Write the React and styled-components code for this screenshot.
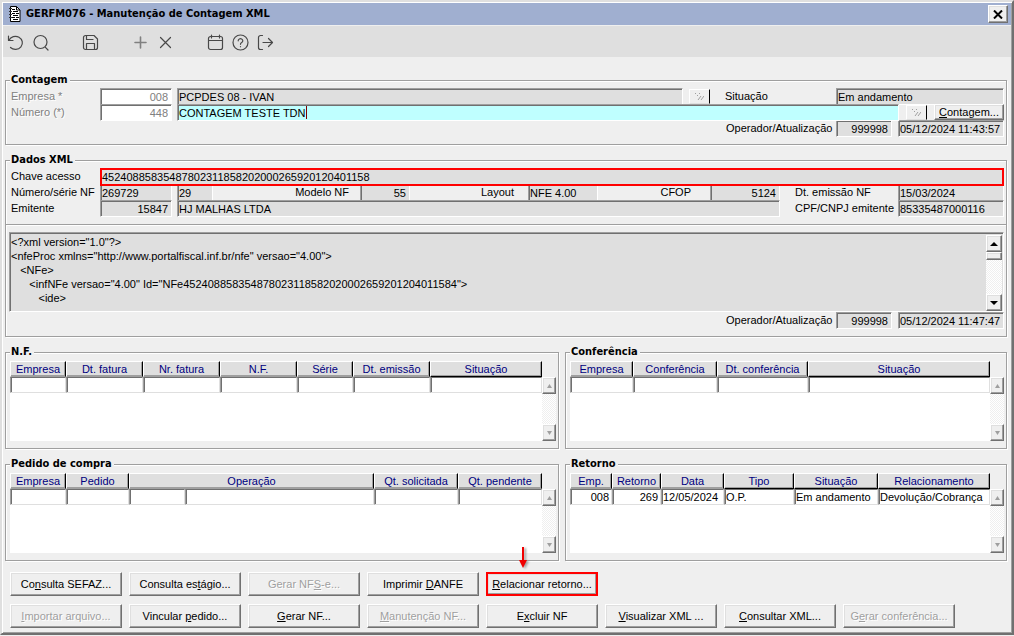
import React from "react";
import styled, { createGlobalStyle, css } from "styled-components";

const GlobalStyle = createGlobalStyle`
  * {
    box-sizing: border-box;
  }

  body {
    margin: 0;
    background: #efefef;
    color: #000;
  }

  body, input, button, textarea, table {
    font-family: "Liberation Sans", Arial, sans-serif;
    font-size: 11px;
    line-height: 14px;
  }
`;

const boldFont = css`
  font-family: "DejaVu Sans Condensed", "DejaVu Sans", sans-serif;
  font-size: 11px;
  font-weight: 700;
`;

const raised = css`
  border: 1px solid;
  border-color: #fff #707070 #707070 #fff;
  box-shadow: inset -1px -1px #9f9f9f, inset 1px 1px #dfdfdf;
  background: #efefef;
`;

const sunken = css`
  border: 1px solid;
  border-color: #9f9f9f #fff #fff #9f9f9f;
  box-shadow: inset 1px 1px #707070;
`;

const Window = styled.main`
  min-width: 960px;
  border: 2px solid;
  border-color: #dfdfdf #707070 #707070 #dfdfdf;
  box-shadow: inset 1px 1px #fff, inset -1px -1px #9f9f9f;
  padding: 1px 1px 5px;
`;

const TitleBar = styled.header`
  display: flex;
  align-items: center;
  height: 22px;
  padding: 0 3px 0 5px;
  background: #a0afd0;
`;

const Title = styled.h1`
  ${boldFont}
  flex: 1;
  margin: 0 0 0 5px;
  line-height: 22px;
`;

const CloseButton = styled.button`
  ${raised}
  display: flex;
  align-items: center;
  justify-content: center;
  width: 20px;
  height: 18px;
  padding: 0;
`;

const Toolbar = styled.nav`
  display: flex;
  height: 32px;
  padding-top: 2px;
  border-top: 1px solid #efefef;
  background: #dfdfdf;
`;

const ToolButton = styled.button`
  display: flex;
  align-items: center;
  justify-content: center;
  width: 25px;
  padding: 0;
  margin-left: ${(props) => (props.$spaced ? "25px" : "0")};
  border: 0;
  background: none;
  color: ${(props) => (props.$soft ? "#808080" : "#484848")};

  svg {
    fill: none;
    stroke: currentColor;
    stroke-width: ${(props) => (props.$soft ? 1.6 : 1.2)};
    stroke-linecap: round;
    stroke-linejoin: round;
  }
`;

const Content = styled.div`
  padding: 16px 4px 0 2px;
`;

const Group = styled.fieldset`
  min-width: 0;
  margin: 0;
  padding: 1px 2px 8px 4px;
  border: 1px solid #9f9f9f;
  box-shadow: inset 1px 1px #fff, 1px 1px #fff;
`;

const Legend = styled.legend`
  ${boldFont}
  height: 14px;
  padding: 0 2px 0 1px;
  background: #efefef;
`;

const Stack = styled.div`
  display: grid;
  gap: 8px;
`;

const XmlPanel = styled.section`
  padding: 7px 2px 8px 3px;
  border: 1px solid #9f9f9f;
  border-top: 0;
  box-shadow: inset 1px 1px #fff, 1px 1px #fff;
`;

const Row = styled.div`
  display: flex;
  height: 16px;
  justify-content: ${(props) => (props.$end ? "flex-end" : "flex-start")};
`;

const Label = styled.label`
  flex: ${(props) => (props.$grow ? `1 1 ${props.$w}px` : `0 0 ${props.$w}px`)};
  padding: 0 ${(props) => props.$pad || 0}px 0 ${(props) => (props.$inset ? 15 : 1)}px;
  line-height: 16px;
  white-space: nowrap;
  text-align: ${(props) => (props.$right ? "right" : "left")};
  ${(props) =>
    props.$dim &&
    css`
      color: #808080;
      text-shadow: 1px 1px #fff;
    `}
`;

const Field = styled.input`
  ${sunken}
  flex: ${(props) => (props.$w ? `0 0 ${props.$w}px` : "1 1 0")};
  min-width: 0;
  width: 100%;
  height: 17px;
  margin-left: ${(props) => props.$gap || 0}px;
  padding: 1px 3px 0 1px;
  border-radius: 0;
  outline: 0;
  background: #dfdfdf;
  color: #000;
  text-align: ${(props) => (props.$right ? "right" : "left")};
  ${(props) => props.$open && "background: #fff; color: #808080;"}
  ${(props) => props.$active && "background: #bfffff;"}
  ${(props) =>
    props.$marked &&
    css`
      z-index: 1;
      height: 18px;
      padding: 0;
      border: 2px solid #f00;
      box-shadow: none;
    `}
`;

const ActiveField = styled.span`
  position: relative;
  display: flex;
  flex: 1;
  margin-left: 5px;
`;

const Caret = styled.i`
  position: absolute;
  top: 2px;
  left: 129px;
  width: 1px;
  height: 13px;
  background: #800000;
`;

const LookupButton = styled.button`
  display: flex;
  align-items: center;
  justify-content: center;
  flex: 0 0 21px;
  height: 15px;
  margin: 1px 0 0 ${(props) => props.$gap}px;
  padding: 0;
  border: 1px solid;
  border-color: #fff #000 #dfdfdf #fff;
  background: #efefef;
`;

const ContagemButton = styled.button`
  ${raised}
  flex: 0 0 70px;
  height: 16px;
  margin-left: 7px;
  padding: 0;
  line-height: 13px;
`;

const XmlBox = styled.div`
  ${sunken}
  display: flex;
  height: 80px;
  padding: 2px 1px 0 1px;
  background: #dfdfdf;
`;

const XmlText = styled.textarea`
  flex: 1;
  height: 100%;
  margin: 0;
  padding: 0;
  border: 0;
  outline: 0;
  overflow: hidden;
  resize: none;
  background: none;
  white-space: pre;
`;

const ScrollTrack = styled.div`
  display: flex;
  flex: 0 0 ${(props) => props.$w}px;
  flex-direction: column;
  margin-top: ${(props) => props.$top || 0}px;
  background: repeating-conic-gradient(#efefef 0 25%, #fff 0 50%) 0 0 / 2px 2px;
`;

const ScrollButton = styled.button`
  ${raised}
  display: flex;
  align-items: center;
  justify-content: center;
  height: 17px;
  padding: 0;

  &:last-child {
    margin-top: auto;
  }
`;

const ScrollThumb = styled.div`
  ${raised}
  height: 8px;
`;

const Grids = styled.div`
  display: grid;
  grid-template-columns: 554fr 442fr;
  gap: 8px 6px;
`;

const GridBody = styled.div`
  display: flex;
  height: 80px;
  margin: 1px 0 -1px;
`;

const TableArea = styled.div`
  flex: 1;
  min-width: 0;
  background: #fff;
`;

const Table = styled.table`
  width: 100%;
  table-layout: fixed;
  border-collapse: separate;
  border-spacing: 0;
`;

const HeadCell = styled.th`
  height: 16px;
  padding: 0;
  border: 1px solid;
  border-color: #fff #000 ${(props) => (props.$dark ? "#000" : "#9f9f9f")} #fff;
  box-shadow: inset -1px -1px #9f9f9f;
  background: #dfdfdf;
  color: #000080;
  font-weight: 400;
  white-space: nowrap;
`;

const Cell = styled.td`
  height: 16px;
  padding: 0 2px 0 1px;
  border: 1px solid;
  border-color: #707070 #dfdfdf #dfdfdf #9f9f9f;
  box-shadow: inset 1px 0 #707070;
  background: #fff;
  line-height: 13px;
  text-align: ${(props) => (props.$right ? "right" : "left")};
  white-space: nowrap;
`;

const Actions = styled.div`
  display: flex;
  flex-wrap: wrap;
  gap: 7px;
  padding: 0 4px 0 5px;
  margin-top: ${(props) => props.$top}px;
`;

const ActionButton = styled.button`
  ${raised}
  position: relative;
  width: 112px;
  height: 24px;
  padding: 0 0 1px;
  color: #000;
  white-space: nowrap;

  &:disabled {
    color: #9f9f9f;
    text-shadow: 1px 1px #fff;
  }

  ${(props) => props.$marked && "border: 2px solid #f00;"}
`;

const Pointer = styled.svg`
  position: absolute;
  top: -28px;
  left: 28px;
  filter: drop-shadow(2px 1px 1px #a0a0a0);
`;

const tools = [
  { name: "Desfazer", draw: <path d="M1.5 2v4.5h4.5M2 6.2a7 6.5 0 1 1 1.5 7.3" /> },
  { name: "Pesquisar", draw: <path d="M8.5 1.500a6.500 6.500 0 1 1 0 13a6.500 6.500 0 1 1 0-13M13.200 13.200l2.800 2.800" /> },
  {
    name: "Salvar",
    spaced: true,
    draw: <path d="M1.500 3.500a2 2 0 0 1 2-2h8.500l3.500 3.500v8.500a2 2 0 0 1-2 2h-10a2 2 0 0 1-2-2zM4.500 15.500v-6h8v6M4.500 1.500v4h6.500" />,
  },
  { name: "Incluir", spaced: true, soft: true, draw: <path d="M8.500 3v11M3 8.500h11" /> },
  { name: "Excluir", draw: <path d="M3.500 3.500l10 10M13.500 3.500l-10 10" /> },
  {
    name: "Calendário",
    spaced: true,
    draw: <path d="M3.500 2.500h10a2 2 0 0 1 2 2v9a2 2 0 0 1-2 2h-10a2 2 0 0 1-2-2v-9a2 2 0 0 1 2-2zM1.500 6.500h14M4.500 1v3M12.500 1v3" />,
  },
  {
    name: "Ajuda",
    draw: <path d="M8.500 1a7.500 7.500 0 1 1 0 15a7.500 7.500 0 1 1 0-15M6.200 6.800a2.300 2.100 0 1 1 3.500 1.800q-1.200.7-1.200 1.700M8.500 12.500v.2" />,
  },
  { name: "Sair", draw: <path d="M5.500 1.500h-2a2 2 0 0 0-2 2v10a2 2 0 0 0 2 2h2M6 8.500h9.500M11.500 4.500l4 4l-4 4" /> },
];

const xml = `<?xml version="1.0"?>
<nfeProc xmlns="http://www.portalfiscal.inf.br/nfe" versao="4.00">
   <NFe>
      <infNFe versao="4.00" Id="NFe452408858354878023118582020002659201204011584">
         <ide>`;

const actionRows = [
  [
    { text: "Co&nsulta SEFAZ..." },
    { text: "Consulta es&tágio..." },
    { text: "Gerar NF&S-e...", off: true },
    { text: "Imprimir &DANFE" },
    { text: "&Relacionar retorno...", marked: true },
  ],
  [
    { text: "&Importar arquivo...", off: true },
    { text: "Vincular &pedido..." },
    { text: "&Gerar NF..." },
    { text: "&Manutenção NF...", off: true },
    { text: "E&xcluir NF" },
    { text: "&Visualizar XML ..." },
    { text: "&Consultar XML..." },
    { text: "G&erar conferência...", off: true },
  ],
];

// the letter after & is the keyboard shortcut
const Mnemonic = ({ text }) => {
  const [before, after] = text.split("&");
  return (
    <>
      {before}
      <u>{after[0]}</u>
      {after.slice(1)}
    </>
  );
};

const Arrow = ({ down, color = "#9f9f9f", size = 5 }) => (
  <svg width={size} height="4" viewBox="0 0 8 4" preserveAspectRatio="none">
    <path d={down ? "M0 0h8l-4 4z" : "M0 4h8l-4-4z"} fill={color} />
  </svg>
);

const Lookup = ({ gap, name }) => (
  <LookupButton $gap={gap} disabled aria-label={name}>
    <svg width="9" height="8" stroke="#9f9f9f" fill="none">
      <path d="M0 .5h1M2 2.500h1M4 .5h1M3 7l3-4M6 7l3-4" />
    </svg>
  </LookupButton>
);

const DataGrid = ({ title, columns, widths, cells }) => (
  <Group>
    <Legend>{title}</Legend>
    <GridBody>
      <TableArea>
        <Table aria-label={title}>
          <colgroup>
            {widths.map((width, i) => (
              <col key={i} width={width} />
            ))}
          </colgroup>
          <thead>
            <tr>
              {columns.map((column) => (
                <HeadCell key={column.name} colSpan={column.span} $dark={column.dark}>
                  {column.name}
                </HeadCell>
              ))}
            </tr>
          </thead>
          <tbody>
            <tr>
              {widths.map((width, i) => (
                <Cell key={i} $right={i < 2}>
                  {cells ? cells[i] : ""}
                </Cell>
              ))}
            </tr>
          </tbody>
        </Table>
      </TableArea>
      <ScrollTrack $w={14} $top={16}>
        <ScrollButton disabled aria-label="Subir">
          <Arrow />
        </ScrollButton>
        <ScrollButton disabled aria-label="Descer">
          <Arrow down />
        </ScrollButton>
      </ScrollTrack>
    </GridBody>
  </Group>
);

export default () => {
  return (
    <>
      <GlobalStyle />
      <Window>
        <TitleBar>
          <svg width="13" height="16">
            <path d="M2.500.5h6l3.500 3.500v11.500h-9.500z" fill="#fff" stroke="#000" />
            <path d="M8.500.5v3.500h3.500M4 3.500h3M5 5.500h5M4 7.500h3M8 7.500h3M5 9.500h5M4 11.500h3M8 11.500h3M5 13.500h5" stroke="#000" fill="none" />
            <path d="M1 2.500h3M1 5.500h3M1 8.500h3M1 11.500h3" stroke="#333" />
          </svg>
          <Title>GERFM076 - Manutenção de Contagem XML</Title>
          <CloseButton aria-label="Fechar">
            <svg width="10" height="9">
              <path d="M1 .5l8 8M9 .5l-8 8" stroke="#000" strokeWidth="2" />
            </svg>
          </CloseButton>
        </TitleBar>

        <Toolbar>
          {tools.map((tool) => (
            <ToolButton key={tool.name} aria-label={tool.name} $spaced={tool.spaced} $soft={tool.soft}>
              <svg width="17" height="17">
                {tool.draw}
              </svg>
            </ToolButton>
          ))}
        </Toolbar>

        <Content>
          <Stack>
            <Group>
              <Legend>Contagem</Legend>
              <Row>
                <Label htmlFor="empresa" $w={90} $dim>Empresa *</Label>
                <Field id="empresa" $w={72} $right $open defaultValue="008" />
                <Field aria-label="Nome da empresa" $gap={5} readOnly defaultValue="PCPDES 08 - IVAN" />
                <Lookup gap={6} name="Buscar empresa" />
                <Label htmlFor="situacao" $w={126} $inset>Situação</Label>
                <Field id="situacao" $w={168} readOnly defaultValue="Em andamento" />
              </Row>
              <Row>
                <Label htmlFor="numero" $w={90} $dim>Número (*)</Label>
                <Field id="numero" $w={72} $right $open defaultValue="448" />
                <ActiveField>
                  <Field aria-label="Descrição" $active defaultValue="CONTAGEM TESTE TDN" />
                  <Caret />
                </ActiveField>
                <Lookup gap={7} name="Buscar contagem" />
                <ContagemButton>
                  <Mnemonic text="&Contagem..." />
                </ContagemButton>
              </Row>
              <Row $end>
                <Label htmlFor="operador" $w={111}>Operador/Atualização</Label>
                <Field id="operador" $w={56} $right readOnly defaultValue="999998" />
                <Field aria-label="Data da atualização" $w={106} $gap={6} readOnly defaultValue="05/12/2024 11:43:57" />
              </Row>
            </Group>

            <div>
              <Group>
                <Legend>Dados XML</Legend>
                <Row>
                  <Label htmlFor="chave" $w={90}>Chave acesso</Label>
                  <Field id="chave" $marked readOnly defaultValue="45240885835487802311858202000265920120401158" />
                </Row>
                <Row>
                  <Label htmlFor="nf" $w={90}>Número/série NF</Label>
                  <Field id="nf" $w={72} readOnly defaultValue="269729" />
                  <Field aria-label="Série" $w={36} $gap={5} readOnly defaultValue="29" />
                  <Label htmlFor="modelo" $w={147} $grow $right $pad={11}>Modelo NF</Label>
                  <Field id="modelo" $w={50} $right readOnly defaultValue="55" />
                  <Label htmlFor="layout" $w={118} $grow $right $pad={14}>Layout</Label>
                  <Field id="layout" $w={70} readOnly defaultValue="NFE 4.00" />
                  <Label htmlFor="cfop" $w={112} $grow $right $pad={19}>CFOP</Label>
                  <Field id="cfop" $w={70} $right readOnly defaultValue="5124" />
                  <Label htmlFor="emissao" $w={118} $inset>Dt. emissão NF</Label>
                  <Field id="emissao" $w={106} readOnly defaultValue="15/03/2024" />
                </Row>
                <Row>
                  <Label htmlFor="emitente" $w={90}>Emitente</Label>
                  <Field id="emitente" $w={72} $right readOnly defaultValue="15847" />
                  <Field aria-label="Nome do emitente" $gap={5} readOnly defaultValue="HJ MALHAS LTDA" />
                  <Label htmlFor="cnpj" $w={118} $inset>CPF/CNPJ emitente</Label>
                  <Field id="cnpj" $w={106} readOnly defaultValue="85335487000116" />
                </Row>
              </Group>
              <XmlPanel>
                <XmlBox>
                  <XmlText aria-label="XML" rows={5} readOnly defaultValue={xml} />
                  <ScrollTrack $w={16}>
                    <ScrollButton aria-label="Subir">
                      <Arrow color="#000" size={8} />
                    </ScrollButton>
                    <ScrollThumb />
                    <ScrollButton aria-label="Descer">
                      <Arrow down color="#000" size={8} />
                    </ScrollButton>
                  </ScrollTrack>
                </XmlBox>
                <Row $end>
                  <Label htmlFor="operadorXml" $w={111}>Operador/Atualização</Label>
                  <Field id="operadorXml" $w={56} $right readOnly defaultValue="999998" />
                  <Field aria-label="Data da atualização do XML" $w={106} $gap={6} readOnly defaultValue="05/12/2024 11:47:47" />
                </Row>
              </XmlPanel>
            </div>

            <Grids>
              <DataGrid
                title="N.F."
                widths={[56, 77, 77, 77, 56, 77, "auto"]}
                columns={[
                  { name: "Empresa" },
                  { name: "Dt. fatura" },
                  { name: "Nr. fatura" },
                  { name: "N.F." },
                  { name: "Série" },
                  { name: "Dt. emissão" },
                  { name: "Situação", dark: true },
                ]}
              />
              <DataGrid
                title="Conferência"
                widths={[63, 84, 91, "auto"]}
                columns={[
                  { name: "Empresa" },
                  { name: "Conferência" },
                  { name: "Dt. conferência" },
                  { name: "Situação", dark: true },
                ]}
              />
              <DataGrid
                title="Pedido de compra"
                widths={[56, 63, 56, "auto", 84, 84]}
                columns={[
                  { name: "Empresa" },
                  { name: "Pedido" },
                  { name: "Operação", span: 2 },
                  { name: "Qt. solicitada" },
                  { name: "Qt. pendente" },
                ]}
              />
              <DataGrid
                title="Retorno"
                widths={[42, 49, 63, 70, 84, "auto"]}
                cells={["008", "269", "12/05/2024", "O.P.", "Em andamento", "Devolução/Cobrança"]}
                columns={[
                  { name: "Emp." },
                  { name: "Retorno" },
                  { name: "Data" },
                  { name: "Tipo", dark: true },
                  { name: "Situação", dark: true },
                  { name: "Relacionamento", dark: true },
                ]}
              />
            </Grids>
          </Stack>

          {actionRows.map((row, i) => (
            <Actions key={i} $top={i === 0 ? 11 : 8}>
              {row.map((action) => (
                <ActionButton key={action.text} disabled={action.off} $marked={action.marked}>
                  <Mnemonic text={action.text} />
                  {action.marked && (
                    <Pointer width="14" height="24">
                      <path d="M6 1h2v13h3l-4 8l-4-8h3z" fill="#f00000" />
                    </Pointer>
                  )}
                </ActionButton>
              ))}
            </Actions>
          ))}
        </Content>
      </Window>
    </>
  );
};
